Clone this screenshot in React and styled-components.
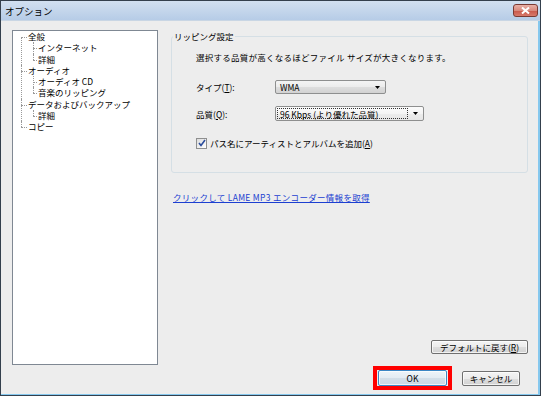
import styled, { createGlobalStyle } from "styled-components";

const GlobalStyle = createGlobalStyle`
  html, body {
    margin: 0;
    padding: 0;
    background: #ffffff;
  }
  body {
    font-family: "Noto Sans CJK JP", "Noto Sans", sans-serif;
    color: #000;
  }
`;

const Window = styled.div`
  width: 541px;
  height: 396px;
  box-sizing: border-box;
  border: 1px solid #34404d;
  background: #ededed;
  display: flex;
  flex-direction: column;
  overflow: hidden;
  box-shadow: inset -2px -1px 0 #86c8ee;
`;

const TitleBar = styled.div`
  height: 19px;
  flex-shrink: 0;
  display: flex;
  align-items: center;
  justify-content: space-between;
  padding: 0 2px 0 4px;
  background: linear-gradient(#d2e0f0, #b6cce7);
  font-size: 9.5px;
  border-bottom: 1px solid #c9d6e4;
`;

const CloseButton = styled.div`
  width: 25px;
  height: 13px;
  box-sizing: border-box;
  border: 1px solid #7a3a33;
  border-radius: 3px;
  background: linear-gradient(#e9b0a6, #d88a7e 50%, #c9574a 51%, #d7796b);
  display: flex;
  align-items: center;
  justify-content: center;
`;

const Main = styled.div`
  display: flex;
  padding: 9px 0 0 11px;
`;

const TreeBox = styled.div`
  width: 146px;
  height: 335px;
  box-sizing: border-box;
  border: 1px solid #7f8893;
  background: #fff;
`;

const TreeList = styled.ul`
  list-style: none;
  margin: 0;
  padding: 0;
`;

const TreeNode = styled.li`
  position: relative;
  padding-left: ${(p) => p.$pad}px;

  &::before {
    content: "";
    position: absolute;
    left: ${(p) => p.$line}px;
    top: ${(p) => (p.$first ? "6px" : "0")};
    ${(p) => (p.$last ? "height: 6px;" : "bottom: 0;")}
    border-left: 1px dotted #9a9a9a;
  }

  &::after {
    content: "";
    position: absolute;
    left: ${(p) => p.$line}px;
    top: 6px;
    width: ${(p) => p.$pad - p.$line - 1}px;
    border-top: 1px dotted #9a9a9a;
  }
`;

const TreeLabel = styled.span`
  display: block;
  height: 11.25px;
  line-height: 11.25px;
  font-size: 8.5px;
  white-space: nowrap;
`;

const RightColumn = styled.div`
  margin-left: 13px;
  width: 357px;
  height: 335px;
  display: flex;
  flex-direction: column;
`;

const Group = styled.fieldset`
  margin: 0;
  padding: 0;
  border: 1px solid #d5dfe5;
  border-radius: 3px;
`;

const Legend = styled.legend`
  margin-left: 1px;
  padding: 0 1px;
  font-size: 8.5px;
  line-height: 12px;
`;

const GroupContent = styled.div`
  padding: 9px 0 23px 24px;
  display: flex;
  flex-direction: column;
`;

const Text = styled.div`
  font-size: 8.5px;
  line-height: 12px;
  letter-spacing: 0.25px;
  white-space: nowrap;
`;

const FieldRow = styled.div`
  display: flex;
  align-items: center;
  margin-top: ${(p) => p.$gap}px;
  font-size: 8.5px;
`;

const FieldLabel = styled.span`
  width: 79px;
  white-space: nowrap;
`;

const Combo = styled.div`
  width: ${(p) => p.$width}px;
  height: ${(p) => p.$height}px;
  box-sizing: border-box;
  border: 1px solid #8e8f8f;
  border-radius: 2px;
  background: ${(p) =>
    p.$focused
      ? "linear-gradient(#fbfbfb, #f4f4f4 50%, #ececec 51%, #e6e6e6)"
      : "linear-gradient(#f4f4f4, #ececec 50%, #dedede 51%, #d2d2d2)"};
  display: flex;
  align-items: center;
  padding: 1px;
  font-size: 8.5px;
  white-space: nowrap;
`;

const ComboText = styled.span`
  flex: 1;
  align-self: stretch;
  display: flex;
  align-items: center;
  padding-left: 2px;
  border: 1px dotted ${(p) => (p.$focused ? "#333" : "transparent")};
`;

const ArrowBox = styled.span`
  width: 14px;
  display: flex;
  justify-content: center;
  align-items: center;
`;

const CheckRow = styled.label`
  display: flex;
  align-items: center;
  margin-top: 16px;
  font-size: 8.5px;
  white-space: nowrap;
`;

const CheckBox = styled.span`
  width: 11px;
  height: 11px;
  box-sizing: border-box;
  border: 1px solid #8e8f8f;
  background: linear-gradient(135deg, #dcdcdc, #ffffff);
  display: flex;
  align-items: center;
  justify-content: center;
  margin-right: 3px;
`;

const LinkText = styled.a`
  margin: 18px 0 0 2px;
  align-self: flex-start;
  font-size: 8.5px;
  line-height: 12px;
  letter-spacing: 0.3px;
  color: #1c3fd1;
  text-decoration: underline;
  white-space: nowrap;
  cursor: pointer;
`;

const Button = styled.button`
  width: ${(p) => p.$width}px;
  height: ${(p) => p.$height || 15}px;
  box-sizing: border-box;
  padding: 0;
  font-family: inherit;
  font-size: 8.5px;
  line-height: 1;
  color: #000;
  border: 1px solid ${(p) => (p.$primary ? "#3c86c4" : "#707070")};
  border-radius: 2px;
  background: ${(p) =>
    p.$primary
      ? "linear-gradient(#eef4f9, #e3ebf2 50%, #d3dee8 51%, #cbd8e4)"
      : "linear-gradient(#f4f4f4, #ececec 50%, #dedede 51%, #d2d2d2)"};
  box-shadow: inset 0 0 0 1px rgba(255, 255, 255, 0.7);
  white-space: nowrap;
`;

const DefaultButtonWrap = styled.div`
  margin-top: auto;
  margin-bottom: 9px;
  align-self: flex-end;
`;

const Footer = styled.div`
  display: flex;
  justify-content: flex-end;
  align-items: center;
  gap: 10px;
  padding: 1px 20px 0 0;
`;

const Highlight = styled.div`
  border: 4px solid #ff0000;
  padding: 0 1px;
  display: flex;
`;

const tree = [
  { label: "全般", children: ["インターネット", "詳細"] },
  { label: "オーディオ", children: ["オーディオ CD", "音楽のリッピング"] },
  { label: "データおよびバックアップ", children: ["詳細"] },
  { label: "コピー", children: [] },
];

function DownArrow() {
  return (
    <svg width="5" height="3" viewBox="0 0 5 3">
      <path d="M0 0H5L2.5 3Z" fill="#000" />
    </svg>
  );
}

function App() {
  return (
    <>
      <GlobalStyle />
      <Window>
        <TitleBar>
          <span>オプション</span>
          <CloseButton>
            <svg width="9" height="7" viewBox="0 0 9 7">
              <path
                d="M1 0.5L8 6.5M8 0.5L1 6.5"
                stroke="#fff"
                strokeWidth="2"
              />
            </svg>
          </CloseButton>
        </TitleBar>

        <Main>
          <TreeBox>
            <TreeList>
              {tree.map((node, i) => (
                <TreeNode
                  key={node.label}
                  $pad={15}
                  $line={8}
                  $first={i === 0}
                  $last={i === tree.length - 1}
                >
                  <TreeLabel>{node.label}</TreeLabel>
                  {node.children.length > 0 && (
                    <TreeList>
                      {node.children.map((child, j) => (
                        <TreeNode
                          key={child}
                          $pad={10}
                          $line={5}
                          $last={j === node.children.length - 1}
                        >
                          <TreeLabel>{child}</TreeLabel>
                        </TreeNode>
                      ))}
                    </TreeList>
                  )}
                </TreeNode>
              ))}
            </TreeList>
          </TreeBox>

          <RightColumn>
            <Group>
              <Legend>リッピング設定</Legend>
              <GroupContent>
                <Text>
                  選択する品質が高くなるほどファイル サイズが大きくなります。
                </Text>
                <FieldRow $gap={17}>
                  <FieldLabel>
                    タイプ(<u>T</u>):
                  </FieldLabel>
                  <Combo $width={111} $height={14}>
                    <ComboText>WMA</ComboText>
                    <ArrowBox>
                      <DownArrow />
                    </ArrowBox>
                  </Combo>
                </FieldRow>
                <FieldRow $gap={12}>
                  <FieldLabel>
                    品質(<u>Q</u>):
                  </FieldLabel>
                  <Combo $width={149} $height={15} $focused>
                    <ComboText $focused>96 Kbps (より優れた品質)</ComboText>
                    <ArrowBox>
                      <DownArrow />
                    </ArrowBox>
                  </Combo>
                </FieldRow>
                <CheckRow>
                  <CheckBox>
                    <svg width="8" height="8" viewBox="0 0 8 8">
                      <path
                        d="M1 4L3 6.5L7 1"
                        stroke="#2a4c9c"
                        strokeWidth="1.6"
                        fill="none"
                      />
                    </svg>
                  </CheckBox>
                  パス名にアーティストとアルバムを追加(<u>A</u>)
                </CheckRow>
              </GroupContent>
            </Group>

            <LinkText>クリックして LAME MP3 エンコーダー情報を取得</LinkText>

            <DefaultButtonWrap>
              <Button $width={97} $height={14}>
                デフォルトに戻す(<u>R</u>)
              </Button>
            </DefaultButtonWrap>
          </RightColumn>
        </Main>

        <Footer>
          <Highlight>
            <Button $width={69} $height={16} $primary>
              OK
            </Button>
          </Highlight>
          <Button $width={58} $height={15}>
            キャンセル
          </Button>
        </Footer>
      </Window>
    </>
  );
}

export default App;
